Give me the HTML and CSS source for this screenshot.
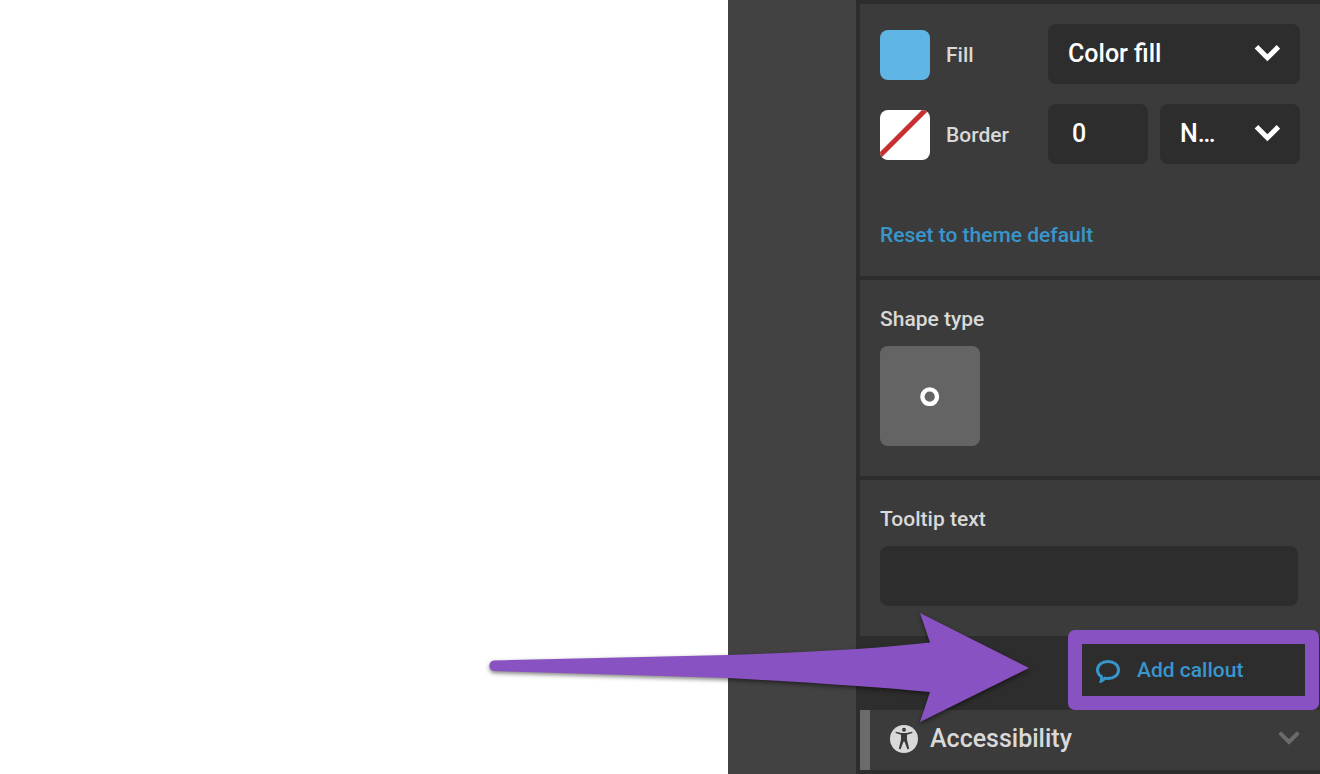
FILE: index.html
```html
<!DOCTYPE html>
<html lang="en">
<head>
    <meta charset="UTF-8">
    <meta name="viewport" content="width=device-width, initial-scale=1.0">
    <title>Shape settings</title>
    <link rel="stylesheet" href="styles.css">
</head>
<body>
    <div class="editor">
        <main class="canvas"></main>
        <div class="gutter"></div>
        <aside class="panel">
            <section class="section">
                <div class="row">
                    <button class="swatch swatch-fill" aria-label="Fill color"></button>
                    <label class="row-label" for="fill">Fill</label>
                    <div class="select">
                        <select id="fill">
                            <option>Color fill</option>
                        </select>
                        <svg class="chevron" width="26" height="18" viewBox="0 0 26 18">
                            <path d="M2.4 2.8 L13.4 13.8 L24.4 2.8" fill="none" stroke="#fff" stroke-width="5"/>
                        </svg>
                    </div>
                </div>
                <div class="row">
                    <button class="swatch swatch-none" aria-label="Border color">
                        <svg width="50" height="50" viewBox="0 0 50 50">
                            <path d="M-5 50.5 L50.5 -5" stroke="#c73032" stroke-width="5"/>
                        </svg>
                    </button>
                    <label class="row-label" for="border-width">Border</label>
                    <input class="number" id="border-width" type="text" value="0">
                    <div class="select">
                        <select aria-label="Border style">
                            <option>N…</option>
                        </select>
                        <svg class="chevron" width="26" height="18" viewBox="0 0 26 18">
                            <path d="M2.4 2.8 L13.4 13.8 L24.4 2.8" fill="none" stroke="#fff" stroke-width="5"/>
                        </svg>
                    </div>
                </div>
                <a class="reset" href="#">Reset to theme default</a>
            </section>

            <section class="section section-shape">
                <h2>Shape type</h2>
                <button class="shape" aria-label="Circle">
                    <svg width="20" height="20" viewBox="0 0 20 20">
                        <circle cx="9.7" cy="10.7" r="7.3" fill="none" stroke="#fff" stroke-width="4.4"/>
                    </svg>
                </button>
            </section>

            <section class="section section-tooltip">
                <label for="tooltip">Tooltip text</label>
                <input class="tooltip" id="tooltip" type="text">
            </section>

            <div class="callout-row">
                <button class="callout">
                    <svg width="26" height="26" viewBox="0 0 26 26">
                        <path d="M13 4.5 C19 4.5 23.5 8 23.5 12.9 C23.5 18 19 21.4 13 21.4 C12 21.4 11 21.3 10 21.1 C9 22.4 7.8 23.4 6.2 24 C6.6 22.3 6.6 20.9 6.4 19.4 C4 17.9 2.5 15.8 2.5 12.9 C2.5 8 7 4.5 13 4.5 Z" fill="none" stroke="#3896cd" stroke-width="3"/>
                    </svg>
                    Add callout
                </button>
                <div class="highlight"></div>
                <svg class="arrow" width="548" height="118" viewBox="0 0 548 118">
                    <path d="M8 50.5 L242 45 Q370 41 444 32.5 L434 3 L543 58 L434 112 L444 82 Q370 75 242 68 L8 61 A5.3 5.3 0 0 1 8 50.5 Z" fill="#8952c2"/>
                </svg>
            </div>

            <button class="accordion">
                <svg width="28" height="28" viewBox="0 0 28 28">
                    <circle cx="14" cy="14" r="14" fill="#d9d9d9"/>
                    <circle cx="14" cy="4.8" r="2" fill="#3b3b3b"/>
                    <path d="M5.8 6.8 L11.5 8.1 H16.5 L22.2 6.8 L22.5 8.1 L17 9.7 V14.5 L19.2 23.7 L17.4 24.2 L14.6 16.8 H13.4 L10.6 24.2 L8.8 23.7 L11 14.5 V9.7 L5.5 8.1 Z" fill="#3b3b3b"/>
                </svg>
                <span>Accessibility</span>
                <svg class="accordion-chevron" width="22" height="16" viewBox="0 0 22 16">
                    <path d="M1.7 1.7 L11 11 L20.3 1.7" fill="none" stroke="#6b6b6b" stroke-width="4"/>
                </svg>
            </button>
        </aside>
    </div>
</body>
</html>
```

FILE: styles.css
```css
* {
    box-sizing: border-box;
}
body {
    margin: 0;
    font-family: Roboto, sans-serif;
    font-size: 21px;
    font-weight: 500;
    line-height: 28px;
    color: #d9d9d9;
    background-color: #fff;
}
button, input, select {
    font-family: inherit;
    font-size: inherit;
    font-weight: inherit;
    color: inherit;
    border: 0;
    margin: 0;
    padding: 0;
}
svg {
    display: block;
    flex-shrink: 0;
}
.editor {
    display: flex;
    min-height: 100vh;
    overflow: hidden;
}
.canvas {
    flex: 1;
}
.gutter {
    width: 128px;
    background-color: #424242;
}
.panel {
    width: 464px;
    padding: 4px 0 4px 4px;
    background-color: #2d2d2d;
}
.section {
    padding: 20px;
    margin-bottom: 4px;
    background-color: #3b3b3b;
}
.row {
    display: flex;
    align-items: center;
    margin-bottom: 20px;
}
.swatch {
    width: 50px;
    height: 50px;
    margin-top: 2px;
    border-radius: 8px;
    overflow: hidden;
}
.swatch-fill {
    background-color: #5fb6e5;
}
.swatch-none {
    background-color: #fff;
}
.row-label {
    width: 102px;
    margin-left: 16px;
    padding-top: 1px;
}
.select {
    flex: 1;
    position: relative;
}
.select select {
    display: block;
    width: 100%;
    height: 60px;
    padding: 0 20px 2px;
    appearance: none;
    border-radius: 8px;
    background-color: #2d2d2d;
    color: #fff;
    font-size: 25px;
}
.chevron {
    position: absolute;
    right: 20px;
    top: 20px;
    pointer-events: none;
}
.number {
    width: 100px;
    height: 60px;
    margin-right: 12px;
    padding: 0 24px 2px;
    border-radius: 8px;
    background-color: #2d2d2d;
    color: #fff;
    font-size: 25px;
}
.reset {
    display: block;
    margin-top: 57px;
    padding-bottom: 7px;
    color: #3896cd;
    text-decoration: none;
}
h2 {
    margin: 0;
    font-size: 21px;
    font-weight: 500;
}
.section-shape {
    padding: 25px 20px 30px;
}
.shape {
    display: flex;
    align-items: center;
    justify-content: center;
    width: 100px;
    height: 100px;
    margin-top: 13px;
    border-radius: 8px;
    background-color: #646464;
}
.section-tooltip {
    margin-bottom: 0;
    padding: 25px 22px 30px 20px;
}
.section-tooltip label {
    display: block;
}
.tooltip {
    width: 100%;
    height: 60px;
    margin-top: 13px;
    padding: 0 20px;
    border-radius: 8px;
    background-color: #2d2d2d;
    display: block;
}
.callout-row {
    position: relative;
    display: flex;
    justify-content: flex-end;
    height: 74px;
    padding: 8px 15px;
}
.callout {
    display: flex;
    align-items: center;
    gap: 16px;
    width: 223px;
    height: 52px;
    padding-left: 13px;
    background-color: #2d2d2d;
    color: #3896cd;
}
.highlight {
    position: absolute;
    top: -6px;
    right: 1px;
    width: 251px;
    height: 80px;
    border: 14px solid #8952c2;
    border-radius: 7px;
    pointer-events: none;
}
.arrow {
    position: absolute;
    top: -26px;
    right: 286px;
    pointer-events: none;
    filter: drop-shadow(0 2px 2px rgba(0, 0, 0, 0.5));
}
.accordion {
    display: flex;
    align-items: center;
    gap: 12px;
    width: 100%;
    height: 60px;
    padding: 0 20px 3px;
    border-left: 10px solid #6b6b6b;
    background-color: #3b3b3b;
    font-size: 25px;
    text-align: left;
}
.accordion-chevron {
    margin-left: auto;
}
```
